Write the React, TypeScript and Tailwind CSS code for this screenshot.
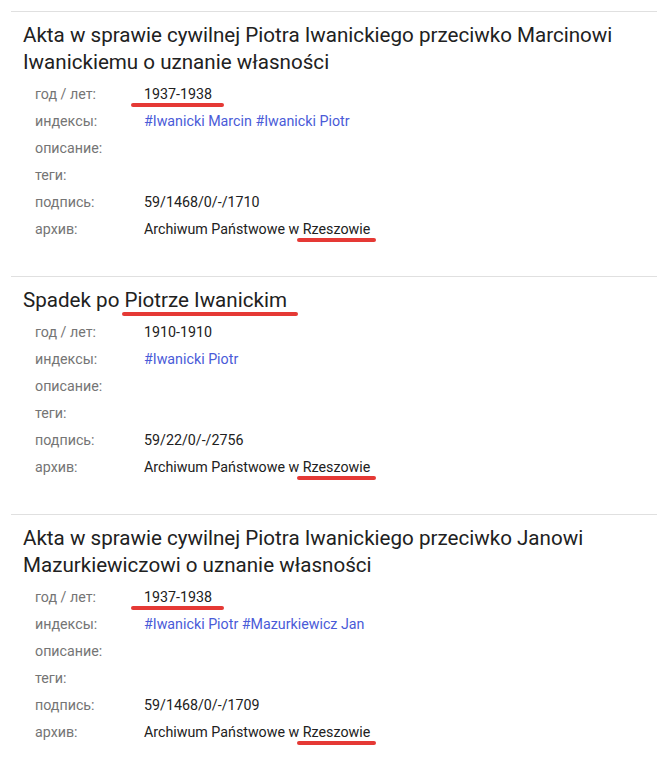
import type { ReactNode } from "react";

type Row = { label: string; value?: ReactNode };

function Mark({ children, l, r, t }: { children: ReactNode; l: string; r: string; t: string }) {
  // red marker line drawn under a piece of text (annotation)
  return (
    <span className="relative inline-block">
      {children}
      <span className={`absolute ${l} ${r} ${t} h-[4px] rounded-full bg-[#e53935]`} />
    </span>
  );
}

const Links = ({ tags }: { tags: string[] }) => (
  <span className="text-[#4a5bd8]">
    {tags.map((t, i) => (
      <span key={t}>
        {i > 0 && " "}#{t}
      </span>
    ))}
  </span>
);

const Years = () => (
  <Mark l="-left-[13px]" r="-right-[12px]" t="top-[19px]">
    1937-1938
  </Mark>
);

const Archive = () => (
  <>
    Archiwum Państwowe w{" "}
    <Mark l="-left-[6px]" r="-right-[6px]" t="top-[19px]">
      Rzeszowie
    </Mark>
  </>
);

function Record({ title, rows, last }: { title: ReactNode; rows: Row[]; last?: boolean }) {
  return (
    <div className={`border-t border-[#e0e0e0] pt-[10px] ${last ? "pb-[20px]" : "pb-[33px]"}`}>
      <h2 className="pl-[12px] pr-4 text-[20.6px] leading-[27px] text-[#212121]">{title}</h2>
      <div className="mt-[5px] pl-[24px]">
        {rows.map((r) => (
          <div key={r.label} className="flex h-[27px] items-center text-[14.25px]">
            <div className="w-[109px] shrink-0 text-[#757575]">{r.label}</div>
            <div className="text-[#212121]">{r.value}</div>
          </div>
        ))}
      </div>
    </div>
  );
}

export default function App() {
  return (
    <div className="min-h-[780px] bg-white pt-[11px] pl-[11px] font-['Roboto',sans-serif]">
      <Record
        title="Akta w sprawie cywilnej Piotra Iwanickiego przeciwko Marcinowi Iwanickiemu o uznanie własności"
        rows={[
          { label: "год / лет:", value: <Years /> },
          { label: "индексы:", value: <Links tags={["Iwanicki Marcin", "Iwanicki Piotr"]} /> },
          { label: "описание:" },
          { label: "теги:" },
          { label: "подпись:", value: "59/1468/0/-/1710" },
          { label: "архив:", value: <Archive /> },
        ]}
      />
      <Record
        title={
          <>
            Spadek po{" "}
            <Mark l="-left-[3px]" r="-right-[11px]" t="top-[25px]">
              Piotrze Iwanickim
            </Mark>
          </>
        }
        rows={[
          { label: "год / лет:", value: "1910-1910" },
          { label: "индексы:", value: <Links tags={["Iwanicki Piotr"]} /> },
          { label: "описание:" },
          { label: "теги:" },
          { label: "подпись:", value: "59/22/0/-/2756" },
          { label: "архив:", value: <Archive /> },
        ]}
      />
      <Record
        last
        title="Akta w sprawie cywilnej Piotra Iwanickiego przeciwko Janowi Mazurkiewiczowi o uznanie własności"
        rows={[
          { label: "год / лет:", value: <Years /> },
          { label: "индексы:", value: <Links tags={["Iwanicki Piotr", "Mazurkiewicz Jan"]} /> },
          { label: "описание:" },
          { label: "теги:" },
          { label: "подпись:", value: "59/1468/0/-/1709" },
          { label: "архив:", value: <Archive /> },
        ]}
      />
    </div>
  );
}
